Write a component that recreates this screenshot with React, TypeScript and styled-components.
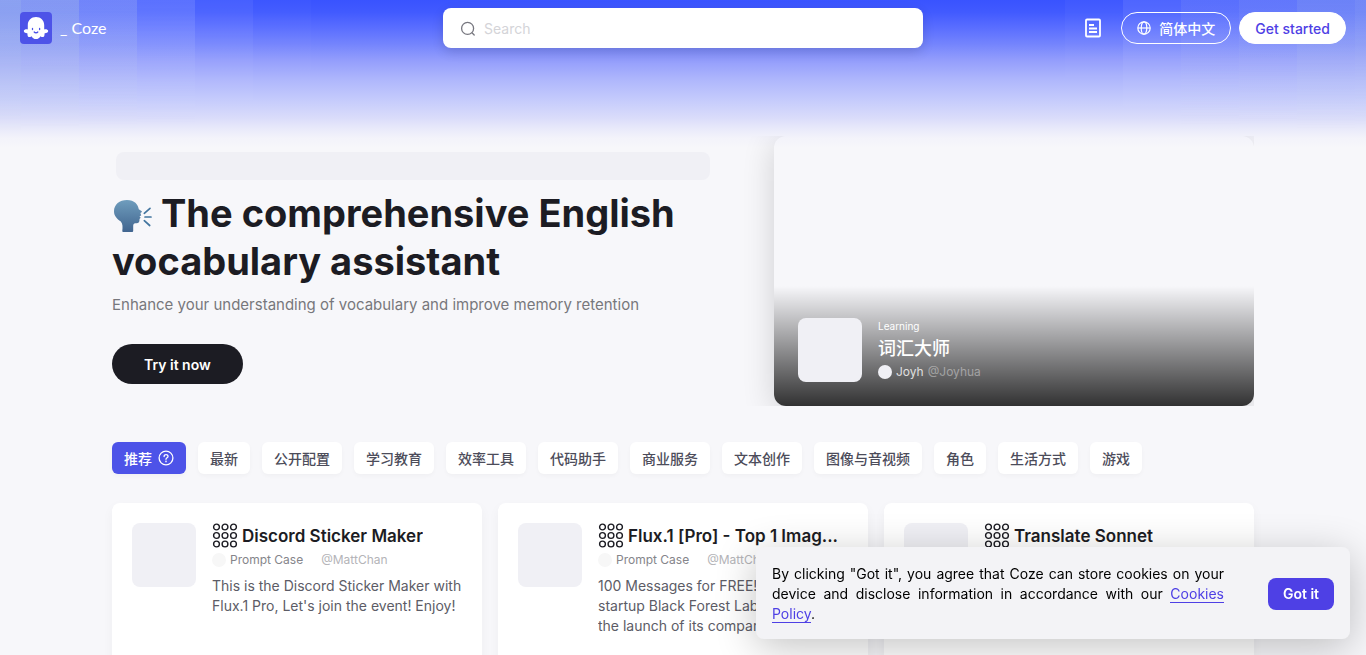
import React from "react";
import styled, { createGlobalStyle } from "styled-components";

const GlobalStyle = createGlobalStyle`
  *, *::before, *::after { box-sizing: border-box; }
  body {
    margin: 0;
    background: #f7f7fa;
    color: #1c1c23;
    font-family: Inter, "Noto Sans CJK SC", sans-serif;
    font-size: 14px;
    line-height: 20px;
  }
  button, input { font: inherit; }
  h1, h2, p { margin: 0; }
`;

const Page = styled.div`
  position: relative;
  isolation: isolate;
  height: 100vh;
  overflow-y: auto;
  scrollbar-width: none;
  background: #f7f7fa
    linear-gradient(180deg,
      #3953ff 0, #415aff 12px, #5a6eff 28px, #7484fd 44px, #939dfc 60px,
      #afb7fc 80px, #c5cbfc 100px, #dadcfa 118px, #e8e9fa 128px,
      #f3f3fa 138px, #f7f7fa 148px) no-repeat 0 0 / 100% 148px;

  /* vertical light bars at both ends of the sky */
  &::before {
    content: "";
    position: absolute;
    inset: 0 0 auto;
    z-index: -1;
    height: 148px;
    background:
      linear-gradient(90deg,
        rgba(221, 238, 226, 0.5) 0 21px,
        rgba(221, 234, 230, 0.46) 21px 79px,
        rgba(221, 230, 242, 0.34) 79px 137px,
        rgba(228, 235, 255, 0.2) 137px 195px,
        rgba(255, 255, 255, 0.07) 195px 253px,
        rgba(255, 255, 255, 0.02) 253px 311px,
        transparent 311px),
      linear-gradient(270deg,
        rgba(228, 240, 230, 0.34) 0 11px,
        rgba(228, 240, 230, 0.3) 11px 69px,
        rgba(228, 235, 240, 0.24) 69px 127px,
        rgba(235, 240, 245, 0.18) 127px 185px,
        rgba(255, 255, 255, 0.11) 185px 243px,
        rgba(255, 255, 255, 0.03) 243px 301px,
        transparent 301px);
    mask-image: linear-gradient(180deg, #000 0, rgba(0, 0, 0, 0.85) 36px, rgba(0, 0, 0, 0.55) 64px, transparent 130px);
  }
`;

const TopBar = styled.header`
  display: grid;
  grid-template-columns: 1fr minmax(0, 480px) 1fr;
  align-items: center;
  height: 56px;
  padding: 0 20px;
`;

const Brand = styled.a`
  display: flex;
  align-items: center;
  gap: 8px;
  color: #fff;
  font-family: Lato, sans-serif;
  font-size: 16px;
  text-decoration: none;
`;

const SearchBox = styled.label`
  display: flex;
  align-items: center;
  gap: 8px;
  height: 40px;
  padding: 0 17px;
  border-radius: 8px;
  background: #fff;
  box-shadow: 0 4px 12px rgba(0, 0, 0, 0.14);
`;

const SearchInput = styled.input`
  flex: 1;
  min-width: 0;
  padding: 2px 0 0;
  border: 0;
  outline: 0;
  background: none;
  &::placeholder { color: #d4d4d8; opacity: 1; }
`;

const Actions = styled.div`
  display: flex;
  justify-content: flex-end;
  align-items: center;
  gap: 8px;
`;

const IconButton = styled.button`
  display: flex;
  justify-content: center;
  align-items: center;
  width: 40px;
  height: 32px;
  padding: 0;
  border: 0;
  background: none;
`;

const ButtonLabel = styled.span`
  padding-top: 2px;
`;

const PillButton = styled.button<{ $solid?: boolean }>`
  display: flex;
  align-items: center;
  gap: 8px;
  height: 32px;
  padding: 0 15px;
  border: 1px solid #fff;
  border-radius: 16px;
  background: ${(p) => (p.$solid ? "#fff" : "transparent")};
  color: ${(p) => (p.$solid ? "#4e40e5" : "#fff")};
  font-weight: 500;
`;

const Content = styled.main`
  padding: 80px 112px 0;
`;

const Hero = styled.section`
  display: flex;
  gap: 20px;
`;

const HeroText = styled.div`
  flex: 1;
  min-width: 0;
  padding-top: 16px;
`;

const Skeleton = styled.div`
  height: 28px;
  margin: 0 4px 9px;
  border-radius: 8px;
  background: #f0f0f5;
`;

const HeroTitle = styled.h1`
  font-size: 38px;
  line-height: 48px;
  font-weight: 700;
  svg { vertical-align: -6px; }
`;

const HeroSubtitle = styled.p`
  margin: 8px 0 27px;
  color: #77777c;
  font-size: 15px;
  line-height: 24px;
`;

const TryButton = styled.button`
  height: 40px;
  padding: 2px 32px 0;
  border: 0;
  border-radius: 20px;
  background: #1c1c23;
  color: #fff;
  font-weight: 600;
`;

const BotFrame = styled.div`
  flex: none;
  padding-left: 40px;
  overflow: hidden;
`;

const BotPreview = styled.article`
  display: flex;
  flex-direction: column;
  justify-content: flex-end;
  width: 480px;
  height: 270px;
  border-radius: 12px;
  overflow: hidden;
  box-shadow: 0 6px 32px rgba(0, 0, 0, 0.16);
`;

const BotCaption = styled.div`
  display: flex;
  gap: 16px;
  padding: 32px 24px 24px;
  background: linear-gradient(180deg, rgba(0, 0, 0, 0), rgba(0, 0, 0, 0.8));
  color: #fff;
`;

const Thumb = styled.div`
  flex: none;
  width: 64px;
  height: 64px;
  border-radius: 8px;
  background: #f0f0f5;
`;

const BotCategory = styled.p`
  font-size: 10px;
  line-height: 16px;
`;

const BotName = styled.h2`
  font-size: 18px;
  line-height: 30px;
  font-weight: 500;
`;

const Author = styled.div`
  display: flex;
  align-items: center;
  gap: 4px;
  font-size: 12px;
  line-height: 16px;
`;

const Dot = styled.span<{ $color: string }>`
  width: 14px;
  height: 14px;
  border-radius: 50%;
  background: ${(p) => p.$color};
`;

const BotOwner = styled.span`
  color: rgba(255, 255, 255, 0.8);
`;

const BotHandle = styled.span`
  color: rgba(255, 255, 255, 0.4);
`;

const Tabs = styled.nav`
  display: flex;
  flex-wrap: wrap;
  gap: 12px;
  margin: 36px 0 29px;
`;

const Tab = styled.button<{ $active?: boolean }>`
  display: flex;
  align-items: center;
  gap: 6px;
  height: 32px;
  padding: 0 12px;
  border: 0;
  border-radius: 6px;
  background: ${(p) => (p.$active ? "#4d53e8" : "#fff")};
  color: ${(p) => (p.$active ? "#fff" : "#4c4c5a")};
  font-weight: 500;
  box-shadow: 0 2px 4px rgba(0, 0, 0, 0.03);
`;

const CardGrid = styled.section`
  display: grid;
  grid-template-columns: repeat(3, minmax(0, 1fr));
  gap: 16px;
`;

const Card = styled.article`
  display: flex;
  gap: 16px;
  min-height: 184px;
  padding: 20px;
  border-radius: 8px;
  background: #fff;
  box-shadow: 0 4px 12px rgba(0, 0, 0, 0.04);
`;

const CardBody = styled.div`
  flex: 1;
  min-width: 0;
`;

const CardHead = styled.div`
  display: flex;
  align-items: center;
  gap: 4px;
  height: 26px;
  svg { flex: none; }
`;

const CardTitle = styled.h2`
  overflow: hidden;
  font-size: 17px;
  line-height: 26px;
  font-weight: 600;
  text-overflow: ellipsis;
  white-space: nowrap;
`;

const CardAuthor = styled(Author)`
  margin: 3px 0 8px;
  color: #85858a;
`;

const CardHandle = styled.span`
  margin-left: 14px;
  color: #b4b4b8;
`;

const CardText = styled.p`
  display: -webkit-box;
  overflow: hidden;
  color: #5c5c66;
  -webkit-box-orient: vertical;
  -webkit-line-clamp: 3;
`;

const CookieBanner = styled.aside`
  position: fixed;
  right: 16px;
  bottom: 16px;
  display: flex;
  justify-content: space-between;
  align-items: center;
  width: 594px;
  max-width: calc(100vw - 32px);
  padding: 17px 16px 15px;
  border-radius: 8px;
  background: #f3f3f6;
  box-shadow: 0 8px 40px rgba(0, 0, 0, 0.24);
`;

const CookieText = styled.p`
  width: 452px;
  color: #000;
  text-align: justify;
`;

const PolicyLink = styled.a`
  border-bottom: 1px solid #4e40e5;
  color: #4e40e5;
  text-decoration: none;
`;

const AcceptButton = styled.button`
  height: 32px;
  padding: 0 15px;
  border: 0;
  border-radius: 8px;
  background: #4e40e5;
  color: #fff;
  font-weight: 600;
`;

const Logo = () => (
  <svg width="32" height="32" viewBox="0 0 32 32" aria-hidden="true">
    <rect width="32" height="32" rx="4" fill="#4d53e8" />
    <path
      fill="#fff"
      d="M16 5c4.700 0 8.200 3.300 8.200 8v4.400c1.600-.3 4 0 4 1.700 0 1.600-1.900 2.100-3.700 2.300.3 2.500-.7 3.900-2.500 3.600-.8-.1-1.300-.4-1.700-.8-.6 1.600-2.300 2.900-4.300 2.900s-3.700-1.300-4.300-2.900c-.4.400-.9.700-1.700.8-1.800.3-2.800-1.100-2.500-3.600-1.800-.2-3.700-.7-3.700-2.300 0-1.700 2.400-2 4-1.700V13c0-4.700 3.500-8 8.200-8z"
    />
    <path
      d="M12.500 16.400v1.200M19.600 16.400v1.200M14.200 20c.8 1 2.800 1 3.600 0"
      fill="none"
      stroke="#4d53e8"
      strokeWidth="1.300"
      strokeLinecap="round"
    />
  </svg>
);

const SearchIcon = () => (
  <svg width="16" height="16" viewBox="0 0 16 16" fill="none" stroke="#77777f" strokeWidth="1.300" strokeLinecap="round" aria-hidden="true">
    <circle cx="7.600" cy="8.400" r="6" />
    <path d="M12.200 13l2 2" />
  </svg>
);

const DocIcon = () => (
  <svg width="16" height="20" viewBox="0 0 16 20" fill="none" stroke="#fff" strokeWidth="1.800" aria-hidden="true">
    <rect x="1" y="1.500" width="14" height="17" rx="1" />
    <path d="M4 7h5M4 10.500h8M4 14h8" />
  </svg>
);

const GlobeIcon = () => (
  <svg width="14" height="14" viewBox="0 0 14 14" fill="none" stroke="#fff" strokeWidth="1.200" aria-hidden="true">
    <circle cx="7" cy="7" r="6.200" />
    <ellipse cx="7" cy="7" rx="2.800" ry="6.200" />
    <path d="M1 7h12" />
  </svg>
);

const HelpIcon = () => (
  <svg width="16" height="16" viewBox="0 0 16 16" fill="none" stroke="#fff" strokeWidth="1.300" strokeLinecap="round" aria-hidden="true">
    <circle cx="8" cy="8" r="6.900" />
    <path d="M6.100 6.500c0-2.600 3.900-2.500 3.900-.1 0 1.400-2 1.400-2 2.900" />
    <circle cx="8" cy="11.400" r=".3" />
  </svg>
);

const SpeakingHead = () => (
  <svg width="40" height="34" viewBox="0 0 40 34" role="img" aria-label="Speaking head">
    <defs>
      <linearGradient id="head" x1="0" y1="0" x2="0" y2="1">
        <stop offset="0" stopColor="#6f9dbd" />
        <stop offset="1" stopColor="#41658f" />
      </linearGradient>
    </defs>
    <path
      fill="url(#head)"
      d="M15 1C22.500 1 26 5.500 26.800 10.300l3 1.900c.4.600-.4 1.200-1.400 1.700l.8 2.600-1.700.8 1.200 1.500-1.200 1.300c.2 3-.8 4.200-3 4.200-2.400 0-3.200.3-3.300 2.500v5c0 .8-.5 1.200-1.300 1.200h-8.400c-.8 0-1.300-.5-1.200-1.300.4-3.200.6-7-1.500-9.200C4.800 19.800 2 17 2 12.300 2 5.500 7.500 1 15 1z"
    />
    <path d="M32.300 14.300l5.700-5M33 18h6M32.300 21.700l5.400 4.800" stroke="#42759f" strokeWidth="1.700" strokeLinecap="round" />
  </svg>
);

const RingGrid = () => (
  <svg width="26" height="26" viewBox="0 0 26 26" fill="none" stroke="#1c1c23" strokeWidth="1.400" aria-hidden="true">
    {[4, 12.5, 21].flatMap((y) =>
      [4.500, 13, 21.500].map((x) => <circle key={`${x}-${y}`} cx={x} cy={y} r="2.900" />)
    )}
  </svg>
);

const categories = [
  "推荐", "最新", "公开配置", "学习教育", "效率工具", "代码助手",
  "商业服务", "文本创作", "图像与音视频", "角色", "生活方式", "游戏",
];

const bots = [
  {
    title: "Discord Sticker Maker",
    text: "This is the Discord Sticker Maker with Flux.1 Pro, Let's join the event! Enjoy!",
  },
  {
    title: "Flux.1 [Pro] - Top 1 Imag...",
    text: "100 Messages for FREE! The AI startup Black Forest Labs announced the launch of its company.",
  },
  { title: "Translate Sonnet", text: "" },
];

export default function App() {
  return (
    <Page>
      <GlobalStyle />
      <TopBar>
        <Brand href="#">
          <Logo />
          <span>_ Coze</span>
        </Brand>
        <SearchBox>
          <SearchIcon />
          <SearchInput type="text" placeholder="Search" aria-label="Search" />
        </SearchBox>
        <Actions>
          <IconButton aria-label="Documentation"><DocIcon /></IconButton>
          <PillButton><GlobeIcon /><ButtonLabel>简体中文</ButtonLabel></PillButton>
          <PillButton $solid><ButtonLabel>Get started</ButtonLabel></PillButton>
        </Actions>
      </TopBar>
      <Content>
        <Hero>
          <HeroText>
            <Skeleton />
            <HeroTitle>
              <SpeakingHead /> The comprehensive English vocabulary assistant
            </HeroTitle>
            <HeroSubtitle>
              Enhance your understanding of vocabulary and improve memory retention
            </HeroSubtitle>
            <TryButton>Try it now</TryButton>
          </HeroText>
          <BotFrame>
            <BotPreview>
              <BotCaption>
                <Thumb />
                <div>
                  <BotCategory>Learning</BotCategory>
                  <BotName>词汇大师</BotName>
                  <Author>
                    <Dot $color="#f0f0f5" />
                    <BotOwner>Joyh</BotOwner>
                    <BotHandle>@Joyhua</BotHandle>
                  </Author>
                </div>
              </BotCaption>
            </BotPreview>
          </BotFrame>
        </Hero>
        <Tabs>
          {categories.map((name, i) => (
            <Tab key={name} $active={i === 0}>
              <ButtonLabel>{name}</ButtonLabel>
              {i === 0 && <HelpIcon />}
            </Tab>
          ))}
        </Tabs>
        <CardGrid>
          {bots.map((bot) => (
            <Card key={bot.title}>
              <Thumb />
              <CardBody>
                <CardHead>
                  <RingGrid />
                  <CardTitle>{bot.title}</CardTitle>
                </CardHead>
                <CardAuthor>
                  <Dot $color="#f7f7f7" />
                  <span>Prompt Case</span>
                  <CardHandle>@MattChan</CardHandle>
                </CardAuthor>
                <CardText>{bot.text}</CardText>
              </CardBody>
            </Card>
          ))}
        </CardGrid>
      </Content>
      <CookieBanner>
        <CookieText>
          By clicking "Got it", you agree that Coze can store cookies on your device and
          disclose information in accordance with our{" "}
          <PolicyLink href="#">Cookies Policy</PolicyLink>.
        </CookieText>
        <AcceptButton>Got it</AcceptButton>
      </CookieBanner>
    </Page>
  );
}
